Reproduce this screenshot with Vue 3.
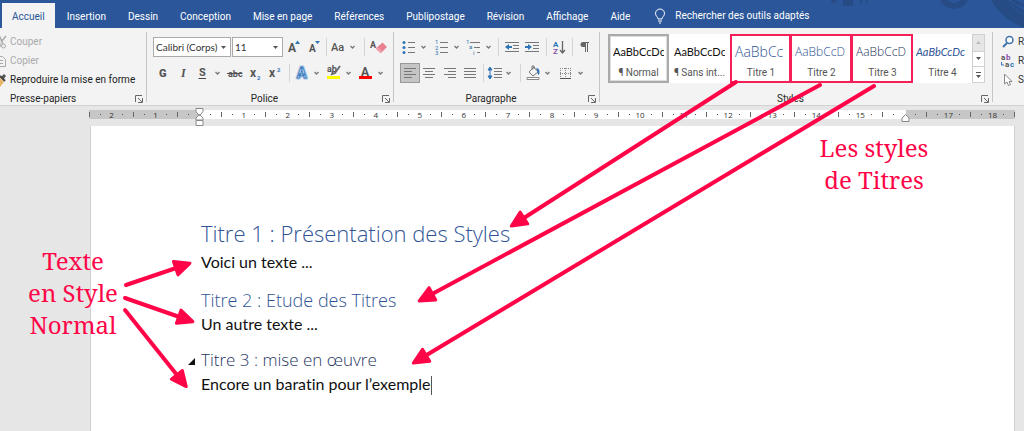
<script setup>
import { ref } from 'vue'

const tabs = ['Accueil', 'Insertion', 'Dessin', 'Conception', 'Mise en page', 'Références', 'Publipostage', 'Révision', 'Affichage', 'Aide']
const font = ref('Calibri (Corps)')
const size = ref('11')

const lines = (x, w, ys) => ys.map(y => `<path d="M${x} ${y}.5h${w}" stroke="#777"/>`).join('')
const letter = (x, y, s, t, extra = '') => `<text x="${x}" y="${y}" font-size="${s}" fill="#555" ${extra}>${t}</text>`
const blue = 'style="fill:#2e75b6"'

const icons = {
  chev: '<path d="M7.500 9l2 2 2-2" fill="none" stroke="#777" stroke-width="1.300"/>',
  grow: letter(4, 15, 12, 'A', 'font-weight="bold"') + '<path d="M11 7l2.500-3.500L16 7z" fill="#2e75b6"/>',
  shrink: letter(5, 15, 10, 'A', 'font-weight="bold"') + '<path d="M11 4h5l-2.500 3z" fill="#2e75b6"/>',
  aa: letter(3, 14, 11, 'Aa', 'font-weight="500"'),
  eraser: letter(2, 11, 9, 'A', 'font-weight="bold"') + '<path d="M10 9.500l4.500-4 4.500 4.500-6 6-4.500-4z" fill="#e8808f"/><path d="M7.500 11.500l2-2 4.500 4.500-2 2z" fill="#f0a0aa"/>',
  bold: letter(6, 14, 11, 'G', 'font-weight="900"'),
  italic: letter(8, 14, 12, 'I', 'font-style="italic" font-weight="bold" font-family="Liberation Serif"'),
  under: letter(6, 13, 11, 'S', 'font-weight="bold"') + '<path d="M5.500 15.500h7.500" stroke="#444"/>',
  strike: letter(3, 14, 9, 'abc', 'font-weight="bold"') + '<path d="M2 10.500h15" stroke="#555"/>',
  sub: letter(4, 14, 12, 'x', 'font-weight="bold"') + letter(11, 17, 6, '2', 'font-weight="bold" ' + blue),
  sup: letter(3, 14, 12, 'x', 'font-weight="bold"') + letter(11, 9, 6, '2', 'font-weight="bold" ' + blue),
  effect: '<text x="5" y="15" font-size="14" font-weight="bold" fill="#fff" stroke="#a9c5e6" stroke-width="3" stroke-linejoin="round">A</text><text x="5" y="15" font-size="14" font-weight="bold" fill="#fff" stroke="#3f7fc0" stroke-width="1">A</text>',
  mark: letter(4, 9, 9, 'ab', 'font-weight="bold"') + '<path d="M17 3l-5 7-3 1 1-3" fill="none" stroke="#666" stroke-width="1.800"/><path d="M4 13h13v3H4z" fill="#ff0"/>',
  color: letter(6, 13, 12, 'A', 'font-weight="bold"') + '<path d="M4 13h13v3H4z" fill="#f00"/>',
  bullets: [5, 10, 15].map(y => `<circle cx="5" cy="${y}.5" r="1.500" fill="#2e75b6"/>`).join('') + lines(9, 7, [5, 10, 15]),
  numbers: letter(3, 7, 6, '1', blue) + letter(3, 13, 6, '2', blue) + letter(3, 18, 6, '3', blue) + lines(8, 8, [5, 10, 15]),
  multi: letter(3, 7, 6, '1', blue) + letter(6, 12, 6, 'a', blue) + letter(10, 18, 6, 'i', blue) + lines(7, 10, [5]) + lines(11, 6, [10]) + lines(14, 3, [15]),
  outdent: lines(3, 14, [5, 14]) + lines(11, 6, [8, 11]) + '<path d="M3 10l4-3v2h3v2H7v2z" fill="#2e75b6"/>',
  indent: lines(3, 14, [5, 14]) + lines(11, 6, [8, 11]) + '<path d="M10 10L6 7v2H3v2h3v2z" fill="#2e75b6"/>',
  sort: letter(4, 10, 8, 'A', 'font-weight="bold" ' + blue) + letter(4, 17, 8, 'Z', 'font-weight="bold" style="fill:#8a4fa8"') + '<path d="M13.500 4v12M11 13l2.500 3 2.500-3" fill="none" stroke="#666" stroke-width="1.300"/>',
  pilcrow: '<path d="M9 5.500h6M11.500 5v10M13.500 5v10" fill="none" stroke="#666"/><path d="M11 5H9a2.500 2.500 0 0 0 0 5h2z" fill="#666"/>',
  left: lines(4, 12, [5, 11]) + lines(4, 8, [8, 14]),
  center: lines(4, 12, [5, 11]) + lines(6, 8, [8, 14]),
  right: lines(4, 12, [5, 11]) + lines(8, 8, [8, 14]),
  justify: lines(4, 12, [5, 8, 11, 14]),
  spacing: lines(9, 8, [5, 8, 11, 14]) + '<path d="M5 5v10M3 7l2-3 2 3zM3 13l2 3 2-3z" fill="#2e75b6" stroke="#2e75b6"/>',
  bucket: '<path d="M6 9l5-5 4 5-5 4z" fill="#f3f3f3" stroke="#777"/><path d="M9 7V3h2v3" fill="none" stroke="#777"/><path d="M13 5c4 0 4 4 3 7-2-1-1-4-3-7z" fill="#2e75b6"/><path d="M4 14.500h12v2H4z" fill="#fff" stroke="#888"/>',
  borders: '<path d="M5.500 5v10M10.500 5v10M15.500 5v10M5 5.500h11M5 10.500h11" stroke="#888" stroke-dasharray="1 1"/><path d="M5 15.500h11" stroke="#555"/>',
  cut: '<path d="M11 3l4 9M18 4l-5 6" stroke="#aaa" stroke-width="1.500"/><circle cx="15.500" cy="14" r="2" fill="none" stroke="#aaa"/><circle cx="11" cy="13" r="2" fill="none" stroke="#aaa"/>',
  copy: '<path d="M8.500 5.500h6l3 3v7h-9zM11 9.500h4M11 12.500h4" fill="none" stroke="#aaa"/>',
  brush: '<path d="M13 7l3-3 2 2-3 4z" fill="#555"/><path d="M12 6l5 5" stroke="#444" stroke-width="2"/><path d="M8 13l4-5 4 4-4 5z" fill="#e9b668"/>',
  find: '<circle cx="11.500" cy="8" r="3.500" fill="#fff" stroke="#3f73ab" stroke-width="1.500"/><path d="M9 11l-4 4" stroke="#3f73ab" stroke-width="2"/>',
  replace: letter(3, 9, 8, 'a', 'font-weight="bold"') + letter(8, 9, 8, 'b', 'font-weight="bold" style="fill:#8a4fa8"') + letter(7, 16, 8, 'a', 'font-weight="bold"') + letter(12, 16, 8, 'c', 'font-weight="bold" ' + blue) + '<path d="M3.500 11v3H6" fill="none" stroke="#2e75b6"/>',
  pointer: '<path d="M6.500 4v10l2.500-2 1.500 3.500 2-1-1.500-3h3z" fill="#fff" stroke="#888"/>',
}

const b = (icon, w, label) => ({ icon, w, label })
const sep = w => ({ sep: true, w })
const fontTop = [b('grow', 20, 'Agrandir'), b('shrink', 20, 'Réduire'), sep(4), b('aa', 20, 'Casse'), b('chev', 10, 'Choix de casse'), sep(12), b('eraser', 16, 'Effacer la mise en forme')]
const fontBottom = [b('bold', 20, 'Gras'), b('italic', 20, 'Italique'), b('under', 20, 'Souligné'), b('chev', 10, 'Choix de soulignement'), b('strike', 24, 'Barré'), b('sub', 18, 'Indice'), b('sup', 22, 'Exposant'), sep(4), b('effect', 22, 'Effets de texte'), b('chev', 8, 'Choix des effets'), b('mark', 24, 'Surlignage'), b('chev', 8, 'Choix du surlignage'), b('color', 24, 'Couleur'), b('chev', 8, 'Choix de couleur')]
const paraTop = [b('bullets', 18, 'Puces'), b('chev', 12, 'Choix des puces'), b('numbers', 24, 'Numérotation'), b('chev', 6, 'Choix de numérotation'), b('multi', 26, 'Liste à niveaux'), b('chev', 6, 'Choix de liste'), sep(12), b('outdent', 16, 'Diminuer le retrait'), b('indent', 24, 'Augmenter le retrait'), sep(4), b('sort', 22, 'Trier'), sep(4), b('pilcrow', 20, 'Afficher tout')]
const paraBottom = [{ ...b('left', 20, 'Gauche'), on: true }, b('center', 18, 'Centrer'), b('right', 24, 'Droite'), b('justify', 16, 'Justifier'), sep(10), b('spacing', 14, 'Interligne'), b('chev', 14, 'Choix d’interligne'), sep(8), b('bucket', 18, 'Trame'), b('chev', 12, 'Choix de trame'), b('borders', 22, 'Bordures'), b('chev', 10, 'Choix de bordures')]
const groups = [{ name: 'Police', cls: 'police', rows: [fontTop, fontBottom] }, { name: 'Paragraphe', cls: 'para', rows: [paraTop, paraBottom] }]
const clipboard = [{ icon: 'cut', text: 'Couper', off: true }, { icon: 'copy', text: 'Copier', off: true }, { icon: 'brush', text: 'Reproduire la mise en forme' }]
const editing = [{ icon: 'find', text: 'R' }, { icon: 'replace', text: 'R' }, { icon: 'pointer', text: 'S' }]
const styles = [
  { s: 'AaBbCcDc', n: '¶ Normal', c: 'sel' },
  { s: 'AaBbCcDc', n: '¶ Sans int...', c: '' },
  { s: 'AaBbCc', n: 'Titre 1', c: 'h1s hot' },
  { s: 'AaBbCcD', n: 'Titre 2', c: 'h2s hot' },
  { s: 'AaBbCcD', n: 'Titre 3', c: 'h3s hot' },
  { s: 'AaBbCcDc', n: 'Titre 4', c: 'h4s' },
]

// One cell per quarter of a centimetre, starting 2.5 cm left of the margin.
const scale = Array.from({ length: 85 }, (_, i) => {
  const q = i - 10
  if (q === 0 || q === 64) return { t: '', k: '' }
  if (q % 4 === 0) return { t: String(Math.abs(q / 4)), k: 'num' }
  return { t: '', k: q % 2 === 0 ? 'tick' : 'dot' }
})

const arrows = [
  'M736 82L513 225', 'M820 85L421 300', 'M874 86L415 362',
  'M126 285L188 264', 'M125 298L191 321', 'M125 310L185 385',
]
</script>

<template>
  <main class="word">
    <header class="top">
      <svg class="decor" viewBox="0 0 254 28" aria-hidden="true">
        <g fill="none" stroke="#264b85">
          <circle cx="184" cy="-6" r="12" stroke-width="6" />
          <circle cx="272" cy="-28" r="52" stroke-width="12" />
          <path d="M229 0l25 18M235 0l19 12M242 0l12 6" stroke-width="3" />
          <path d="M91 0v4M97 0v3M77 0v5" stroke-width="2" />
        </g>
        <path d="M73 0h10v6H73zM61 0h6l-2 3h-3z" fill="#264b85" />
      </svg>
      <nav class="tabs">
        <button v-for="(t, i) in tabs" :key="t" type="button" :class="{ active: i === 0 }">{{ t }}</button>
      </nav>
      <label class="search">
        <svg width="12" height="16" viewBox="0 0 12 16" aria-hidden="true">
          <path d="M4 11c0-2-2.500-3-2.500-5.500a4.500 4.500 0 0 1 9 0C10.500 8 8 9 8 11zM4 13h4M5 15h2" fill="none" stroke="#fff" />
        </svg>
        <input type="text" placeholder="Rechercher des outils adaptés" />
      </label>
    </header>

    <section class="ribbon">
      <div class="group clip">
        <div class="list">
          <button v-for="c in clipboard" :key="c.text" type="button" :class="{ off: c.off }">
            <svg width="20" height="20" viewBox="0 0 20 20" v-html="icons[c.icon]" />{{ c.text }}
          </button>
        </div>
        <footer><span>Presse-papiers</span><i class="launch"><svg width="8" height="8" viewBox="0 0 8 8"><path d="M.5 7V.5H7M3 3l4 4M7.500 3v4.500H3" fill="none" stroke="#666" /></svg></i></footer>
      </div>

      <div v-for="g in groups" :key="g.name" class="group" :class="g.cls">
        <div class="tools">
          <div v-for="(row, r) in g.rows" :key="r" class="row">
            <template v-if="g.cls === 'police' && r === 0">
              <label class="combo wide">
                <select v-model="font" aria-label="Police"><option>Calibri (Corps)</option></select>
                <svg width="5" height="3" viewBox="0 0 5 3"><path d="M0 0h5L2.500 3z" fill="#555" /></svg>
              </label>
              <label class="combo">
                <select v-model="size" aria-label="Taille"><option>11</option></select>
                <svg width="5" height="3" viewBox="0 0 5 3"><path d="M0 0h5L2.500 3z" fill="#555" /></svg>
              </label>
            </template>
            <template v-for="(t, i) in row" :key="i">
              <span v-if="t.sep" class="sep" :style="{ width: t.w + 'px' }" />
              <button v-else type="button" class="tool" :class="{ on: t.on }" :aria-label="t.label" :style="{ width: t.w + 'px' }">
                <svg width="20" height="20" viewBox="0 0 20 20" v-html="icons[t.icon]" />
              </button>
            </template>
          </div>
        </div>
        <footer><span>{{ g.name }}</span><i class="launch"><svg width="8" height="8" viewBox="0 0 8 8"><path d="M.5 7V.5H7M3 3l4 4M7.500 3v4.500H3" fill="none" stroke="#666" /></svg></i></footer>
      </div>

      <div class="group styles">
        <div class="gallery">
          <button v-for="s in styles" :key="s.n" type="button" class="style" :class="s.c">
            <span class="sample">{{ s.s }}</span><span class="name">{{ s.n }}</span>
          </button>
          <div class="scroller">
            <button type="button" aria-label="Haut" class="dim"><svg width="5" height="3" viewBox="0 0 5 3"><path d="M0 3h5L2.500 0z" fill="#bbb" /></svg></button>
            <button type="button" aria-label="Bas"><svg width="5" height="3" viewBox="0 0 5 3"><path d="M0 0h5L2.500 3z" fill="#555" /></svg></button>
            <button type="button" aria-label="Plus"><svg width="5" height="6" viewBox="0 0 5 6"><path d="M0 0h5v1H0zM0 3h5L2.500 6z" fill="#555" /></svg></button>
          </div>
        </div>
        <footer><span>Styles</span><i class="launch"><svg width="8" height="8" viewBox="0 0 8 8"><path d="M.5 7V.5H7M3 3l4 4M7.500 3v4.500H3" fill="none" stroke="#666" /></svg></i></footer>
      </div>

      <div class="group edit">
        <div class="list">
          <button v-for="c in editing" :key="c.icon" type="button">
            <svg width="20" height="20" viewBox="0 0 20 20" v-html="icons[c.icon]" />{{ c.text }}
          </button>
        </div>
      </div>
    </section>

    <section class="desk">
      <div class="ruler">
        <div class="scale"><span v-for="(c, i) in scale" :key="i" :class="c.k">{{ c.t }}</span></div>
        <svg class="stop start" width="9" height="18" viewBox="0 0 9 18"><path d="M1 .5h7v3L4.500 8 1 3.500zM1 12V10l3.500-3.500L8 10v2zM1 12.500h7v5H1z" fill="#fff" stroke="#888" /></svg>
        <svg class="stop end" width="9" height="8" viewBox="0 0 9 8"><path d="M1 7.500V4l3.500-3.500L8 4v3.500z" fill="#fff" stroke="#888" /></svg>
      </div>
      <article class="page">
        <h1>Titre 1 : Présentation des Styles</h1>
        <p>Voici un texte ...</p>
        <h2>Titre 2 : Etude des Titres</h2>
        <p>Un autre texte ...</p>
        <h3>Titre 3 : mise en œuvre<svg class="fold" width="7" height="7" viewBox="0 0 7 7"><path d="M7 0v7H0z" fill="#111" /></svg></h3>
        <p class="caret">Encore un baratin pour l’exemple</p>
      </article>
    </section>

    <div class="note normal">Texte<br />en Style<br />Normal</div>
    <div class="note titles">Les styles<br />de Titres</div>
    <svg class="arrows" width="1024" height="431" viewBox="0 0 1024 431" aria-hidden="true">
      <defs>
        <marker id="head" markerUnits="userSpaceOnUse" markerWidth="24" markerHeight="24" refX="17" refY="12" orient="auto">
          <path d="M4 5L19 12 4 19z" fill="#ff0548" stroke="#ff0548" stroke-width="3" stroke-linejoin="round" />
        </marker>
      </defs>
      <path v-for="a in arrows" :key="a" :d="a" fill="none" stroke="#ff0548" stroke-width="4" stroke-linecap="round" marker-end="url(#head)" />
    </svg>
  </main>
</template>

<style>
body { background: #e6e6e6; }
</style>

<style scoped>
.word { position: relative; display: flex; flex-direction: column; min-height: 100vh; overflow: hidden; font: 10px/12px Roboto, "Open Sans", sans-serif; color: #333; }
button { padding: 0; border: 0; background: none; font: inherit; color: inherit; }
svg { flex: none; display: block; }
.top { position: relative; display: flex; height: 28px; background: #2b579a; }
.decor { position: absolute; right: 0; top: 0; width: 254px; height: 28px; }
.tabs { display: flex; padding: 3px 0 0 2px; }
.tabs button { padding: 2px 11px 0; color: #fff; white-space: nowrap; }
.tabs button.active { padding: 2px 10px 0; background: #f3f3f3; color: #2b579a; margin-right: 1px; }
.search { display: flex; align-items: center; gap: 9px; padding: 4px 0 0 13px; }
.search input { width: 150px; padding: 0; border: 0; background: none; font: inherit; color: #fff; }
.search input::placeholder { color: #fff; opacity: 1; }

.ribbon { display: flex; height: 77px; background: #f3f3f3; border-bottom: 1px solid #d2d2d2; }
.group { position: relative; display: flex; flex-direction: column; justify-content: space-between; flex: none; box-sizing: border-box; }
.group:not(.edit)::after { content: ""; position: absolute; right: 0; top: 4px; bottom: 3px; width: 1px; background: #c6c6c6; }
.clip { width: 147px; }
.police { width: 247px; }
.para { width: 206px; }
.styles { flex: 1; min-width: 0; }
.edit { width: 31px; }
.group footer { display: flex; align-items: center; height: 12px; padding: 1px 4px 0 0; color: #262626; }
.group footer span { flex: 1; text-align: center; }
.clip footer span { padding-left: 10px; text-align: left; }
.launch { display: block; }
.list { display: flex; flex-direction: column; padding-top: 4px; }
.list button { display: flex; align-items: center; gap: 2px; height: 19px; white-space: nowrap; }
.clip .list button { margin-left: -12px; color: #222; }
.clip .list .off { color: #aaa; }
.edit .list { padding-left: 5px; }
.edit .list button { gap: 0; }
.tools { display: flex; flex-direction: column; gap: 6px; padding: 9px 0 0 6px; }
.row { display: flex; height: 20px; }
.combo { display: grid; align-items: center; width: 51px; margin-right: 1px; background: #fff; border: 1px solid #aaa; box-sizing: border-box; }
.combo.wide { width: 78px; }
.combo > * { grid-area: 1 / 1; }
.combo svg { justify-self: end; margin-right: 4px; pointer-events: none; }
.combo select { appearance: none; width: 100%; padding: 0 0 0 2px; border: 0; background: none; font: 10px/16px Lato, sans-serif; color: #333; }
.tool { display: flex; justify-content: center; align-items: center; flex: none; height: 20px; }
.tool.on { background: #c5c5c5; box-shadow: inset 0 0 0 1px #999; }
.sep { position: relative; flex: none; background: linear-gradient(#d5d5d5, #d5d5d5) center / 1px 18px no-repeat; }
.gallery { display: flex; height: 49px; margin: 6px 8px 0; background: #fff; }
.style { display: flex; flex-direction: column; justify-content: flex-end; gap: 7px; flex: 0 0 61px; padding: 0 5px 4px; overflow: hidden; box-sizing: border-box; }
.style:last-of-type { flex: 1; min-width: 0; padding: 0 3px 4px; }
.sample { height: 16px; font: 11px/16px Lato, sans-serif; color: #111; white-space: nowrap; overflow: hidden; text-align: left; }
.name { text-align: center; color: #555; white-space: nowrap; }
.sel { box-shadow: inset 0 0 0 2px #aaa, inset 0 0 0 3px #ddd; }
.hot { border: 2px solid #f61f58; padding: 0 2px 2px 3px; }
.hot + .hot { border-left-width: 1px; }
.hot .sample { font-family: "Open Sans", sans-serif; font-weight: 350; }
.h1s .sample { font-size: 14px; color: #2f5496; }
.h2s .sample { font-size: 12px; color: #2f5496; }
.h3s .sample { font-size: 12px; color: #1f3763; }
.h4s .sample { font-style: italic; color: #2f5496; }
.scroller { display: grid; grid-template-rows: 1fr 1fr 1fr; width: 13px; border: 1px solid #d0d0d0; box-sizing: border-box; }
.scroller button { display: grid; place-items: center; }
.scroller button + button { border-top: 1px solid #d0d0d0; }
.scroller .dim { background: #e6e6e6; }

.desk { flex: 1; display: flex; flex-direction: column; background: #e6e6e6; }
.ruler { position: relative; height: 9px; margin: 4px 9px 0 89px; background: linear-gradient(90deg, #c6c6c6 110px, #fff 110px, #fff calc(100% - 109px), #c6c6c6 calc(100% - 109px)); }
.scale { display: grid; grid-template-columns: repeat(85, 1fr); margin: 0 -5px; height: 9px; }
.scale span { display: flex; justify-content: center; align-items: center; min-width: 0; font: 8px/9px "Open Sans", sans-serif; color: #333; }
.tick::after { content: ""; width: 1px; height: 5px; background: #666; }
.dot::after { content: ""; width: 1px; height: 1px; background: #555; }
.stop { position: absolute; }
.start { left: 106px; top: -2px; }
.end { right: 105px; top: 4px; }
.page { flex: 1; margin: 7px 9px 0 90px; padding: 93px 110px 0; background: #fff; border: solid #cfcfcf; border-width: 0 1px; font: 16px/24px Lato, "Open Sans", sans-serif; font-variant-ligatures: none; color: #111; }
.page p { margin: 0; }
.page h1, .page h2, .page h3 { font-family: "Open Sans", sans-serif; font-weight: 350; color: #2f5496; }
.page h1 { margin: 0 0 3px; font-size: 22px; line-height: 28px; }
.page h2 { margin: 14px 0 0; font-size: 18px; line-height: 24px; }
.page h3 { position: relative; margin: 12px 0 0; font-size: 17px; line-height: 24px; color: #1f3763; }
.fold { position: absolute; left: -13px; top: 10px; }
.caret::after { content: ""; display: inline-block; width: 1px; height: 19px; vertical-align: middle; background: #555; }
.note { position: absolute; font: 24px/32px "Noto Serif", "Liberation Serif", serif; color: #ff0548; text-align: center; white-space: nowrap; }
.normal { left: 18px; top: 245px; width: 110px; }
.titles { left: 814px; top: 132px; width: 120px; }
.arrows { position: absolute; left: 0; top: 0; pointer-events: none; }
</style>
